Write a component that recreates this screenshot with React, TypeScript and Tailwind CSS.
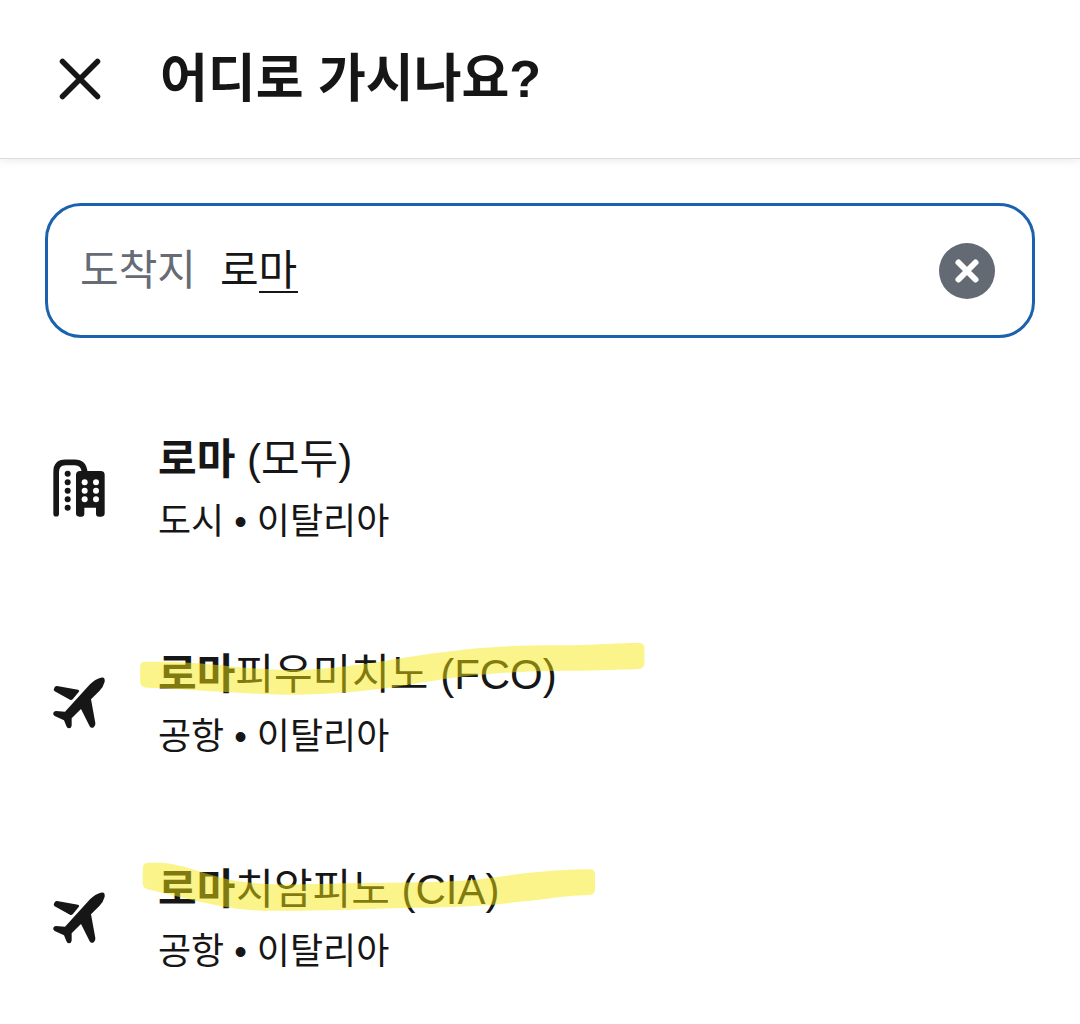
import React, { useState } from 'react';

type Place = {
  id: string;
  match: string;
  rest: string;
  detail: string;
  kind: 'city' | 'airport';
  marker?: { viewBox: string; className: string; d: string };
};

const places: Place[] = [
  { id: 'rome-all', match: '로마', rest: ' (모두)', detail: '도시 • 이탈리아', kind: 'city' },
  {
    id: 'fco',
    match: '로마',
    rest: '피우미치노 (FCO)',
    detail: '공항 • 이탈리아',
    kind: 'airport',
    marker: {
      viewBox: '0 0 1568 270',
      className: 'absolute -left-7 -top-[11px] h-[90px] w-[530px] max-w-none pointer-events-none',
      d: 'M45 95H100C240 97 340 118 460 120C620 122 760 90 900 70C1060 47 1150 46 1300 46C1400 44 1440 39 1505 39Q1522 39 1522 55V100Q1522 116 1505 117C1420 121 1300 122 1200 124C1050 130 960 140 820 165C700 185 560 196 460 194C330 192 200 178 50 173Q30 172 30 155V110Q30 95 45 95Z',
    },
  },
  {
    id: 'cia',
    match: '로마',
    rest: '치암피노 (CIA)',
    detail: '공항 • 이탈리아',
    kind: 'airport',
    marker: {
      viewBox: '0 0 1440 210',
      className: 'absolute -left-7 -top-1.5 h-[70px] w-[480px] max-w-none pointer-events-none',
      d: 'M55 38H90C160 42 210 70 320 93C420 108 520 104 640 100C800 98 900 97 1000 92C1100 85 1200 60 1380 58Q1395 58 1395 73V118Q1395 134 1380 135C1280 138 1240 150 1160 156C1050 172 900 172 780 175C640 180 540 184 400 182C300 180 220 158 50 117Q38 113 38 100V55Q38 38 55 38Z',
    },
  },
];

const CityIcon = () => (
  <svg viewBox="30 24 180 180" className="h-15 w-15 flex-none" aria-hidden="true">
    <path d="M48.5 191V66Q48.5 37 76 37H104Q131 37 134 66" fill="none" stroke="currentColor" strokeWidth="17" strokeLinecap="round" />
    {[71, 97, 122, 148, 173].map((y) => (
      <circle key={y} cx="83" cy={y} r="9" fill="currentColor" />
    ))}
    <path d="M120 63H182Q194 63 194 75V190Q194 200 184 200H177Q168 200 168 191V173H133V191Q133 200 124 200H118Q108 200 108 190V75Q108 63 120 63Z" fill="currentColor" />
    {[97, 122, 148].map((y) => (
      <g key={y} fill="#fff">
        <circle cx="134" cy={y} r="9" />
        <circle cx="168" cy={y} r="9" />
      </g>
    ))}
  </svg>
);

const PlaneIcon = () => (
  <svg viewBox="30 24 180 180" className="h-15 w-15 flex-none" fill="currentColor" aria-hidden="true">
    <path d="M51 63L114 74Q120 76 116 81L98 103Q94 106 90 104L44 79Q39 75 43 68Q46 62 51 63Z" />
    <path d="M182 38Q196 34 194 50Q190 66 178 78L153 103L166 174Q167 180 162 186Q154 192 149 184L123 132L95 160V182Q93 190 87 190Q81 190 79 183L72 166L44 153Q38 149 40 143Q42 138 48 138L75 140L150 58Q166 42 182 38Z" />
  </svg>
);

const App: React.FC = () => {
  const [query, setQuery] = useState('로마');

  return (
    <div className="min-h-screen bg-white text-[#161616] font-['Liberation_Sans','Noto_Sans_CJK_KR',sans-serif]">
      <header className="flex items-center gap-14 border-b border-[#dcdcdc] px-14 pt-9 pb-9 shadow-[0_2px_8px_rgba(0,0,0,0.08)]">
        <button type="button" aria-label="닫기" className="flex-none">
          <svg viewBox="0 0 48 48" className="h-12 w-12" fill="none" stroke="currentColor" strokeWidth="5.500" strokeLinecap="round" aria-hidden="true">
            <path d="M6.500 6.500L41.500 41.500M41.500 6.500L6.500 41.500" />
          </svg>
        </button>
        <h1 className="text-[52px] leading-[86px] font-bold">어디로 가시나요?</h1>
      </header>

      <main className="px-[45px] pt-11">
        <div className="flex h-[135px] items-center gap-6 rounded-[36px] border-3 border-[#1a61ae] pr-[37px] pl-8">
          <label htmlFor="destination" className="flex-none text-[42px] leading-16 text-[#666c75]">
            도착지
          </label>
          <div className="relative min-w-0 flex-1">
            <input
              id="destination"
              type="text"
              value={query}
              onChange={(e) => setQuery(e.target.value)}
              className="block w-full bg-transparent text-[42px] leading-16 outline-none"
            />
            {/* syllable still being composed */}
            {query === '로마' && <span className="absolute bottom-2.5 left-[39px] h-0.5 w-[39px] bg-[#161616]" />}
          </div>
          <button type="button" aria-label="지우기" onClick={() => setQuery('')} className="flex-none">
            <svg viewBox="0 0 56 56" className="h-14 w-14" aria-hidden="true">
              <circle cx="28" cy="28" r="28" fill="#646a74" />
              <path d="M19.500 19.500L36.500 36.500M36.500 19.500L19.500 36.500" stroke="#fff" strokeWidth="6" strokeLinecap="round" />
            </svg>
          </button>
        </div>

        <ul className="mt-[88px] flex flex-col gap-[91px]">
          {places.map((place) => (
            <li key={place.id}>
              <button type="button" className="flex w-full items-center gap-12 pl-[5px] text-left">
                {place.kind === 'city' ? <CityIcon /> : <PlaneIcon />}
                <span className="flex flex-col">
                  <span className="relative text-[42px] leading-[68px]">
                    <b className="font-bold">{place.match}</b>
                    {place.rest}
                    {place.marker && (
                      <svg viewBox={place.marker.viewBox} preserveAspectRatio="none" className={place.marker.className} aria-hidden="true">
                        <path d={place.marker.d} fill="#f5e80a" fillOpacity="0.48" />
                      </svg>
                    )}
                  </span>
                  <span className="text-[36px] leading-14">{place.detail}</span>
                </span>
              </button>
            </li>
          ))}
        </ul>
      </main>
    </div>
  );
};

export default App;
